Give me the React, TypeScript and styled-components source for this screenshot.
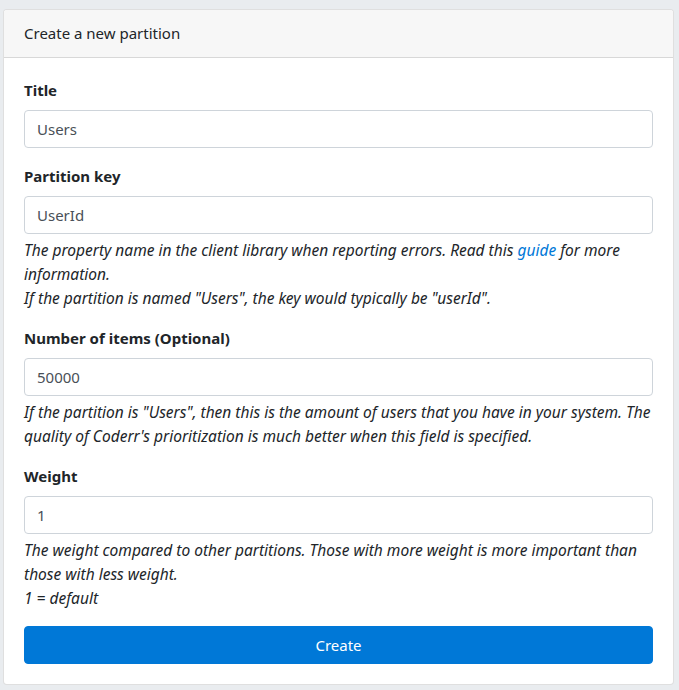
import React from "react";
import styled, { createGlobalStyle } from "styled-components";

const Global = createGlobalStyle`
  html, body { margin: 0; padding: 0; background: #e9ecef; }
  body {
    font-family: "Segoe UI", "Noto Sans", "Open Sans", sans-serif;
    font-size: 16px;
    line-height: 24px;
    color: #212529;
  }
  * { box-sizing: border-box; }
`;

const Page = styled.div`
  padding: 9px 5px 5px 3px;
`;

const Card = styled.div`
  background: #fff;
  border: 1px solid rgba(0, 0, 0, 0.125);
  border-radius: 4px;
  overflow: hidden;
`;

const CardHeader = styled.div`
  background: #f7f7f7;
  border-bottom: 1px solid rgba(0, 0, 0, 0.125);
  padding: 12px 20px;
  font-size: 15px;
  line-height: 23px;
`;

const CardBody = styled.form`
  padding: 20px;
  display: flex;
  flex-direction: column;
`;

const Group = styled.div`
  display: flex;
  flex-direction: column;
  margin-bottom: 16px;
`;

const Label = styled.label`
  font-weight: 700;
  font-size: 15px;
  line-height: 24px;
  margin-bottom: 8px;
`;

const Input = styled.input`
  height: 38px;
  padding: 6px 12px;
  font: inherit;
  font-size: 15px;
  color: #495057;
  border: 1px solid #ced4da;
  border-radius: 4px;
  background: #fff;
  outline: none;
`;

const Help = styled.small`
  display: block;
  margin-top: 4px;
  font-size: 15.5px;
  font-style: italic;
  line-height: 24px;
  color: #212529;
`;

const Link = styled.a`
  color: #0078d7;
  text-decoration: none;
`;

const Button = styled.button`
  height: 38px;
  border: 1px solid #0078d7;
  background: #0078d7;
  color: #fff;
  border-radius: 4px;
  font: inherit;
  font-size: 15px;
  cursor: pointer;
`;

export default function App() {
  return (
    <>
      <Global />
      <Page>
        <Card>
          <CardHeader>Create a new partition</CardHeader>
          <CardBody onSubmit={(e) => e.preventDefault()}>
            <Group>
              <Label>Title</Label>
              <Input defaultValue="Users" />
            </Group>
            <Group>
              <Label>Partition key</Label>
              <Input defaultValue="UserId" />
              <Help>
                The property name in the client library when reporting errors. Read this{" "}
                <Link href="#">guide</Link> for more information.
                <br />
                If the partition is named "Users", the key would typically be "userId".
              </Help>
            </Group>
            <Group>
              <Label>Number of items (Optional)</Label>
              <Input defaultValue="50000" />
              <Help>
                If the partition is "Users", then this is the amount of users that you have in your
                system. The quality of Coderr's prioritization is much better when this field is
                specified.
              </Help>
            </Group>
            <Group>
              <Label>Weight</Label>
              <Input defaultValue="1" />
              <Help>
                The weight compared to other partitions. Those with more weight is more important
                than those with less weight.
                <br />1 = default
              </Help>
            </Group>
            <Button type="submit">Create</Button>
          </CardBody>
        </Card>
      </Page>
    </>
  );
}
